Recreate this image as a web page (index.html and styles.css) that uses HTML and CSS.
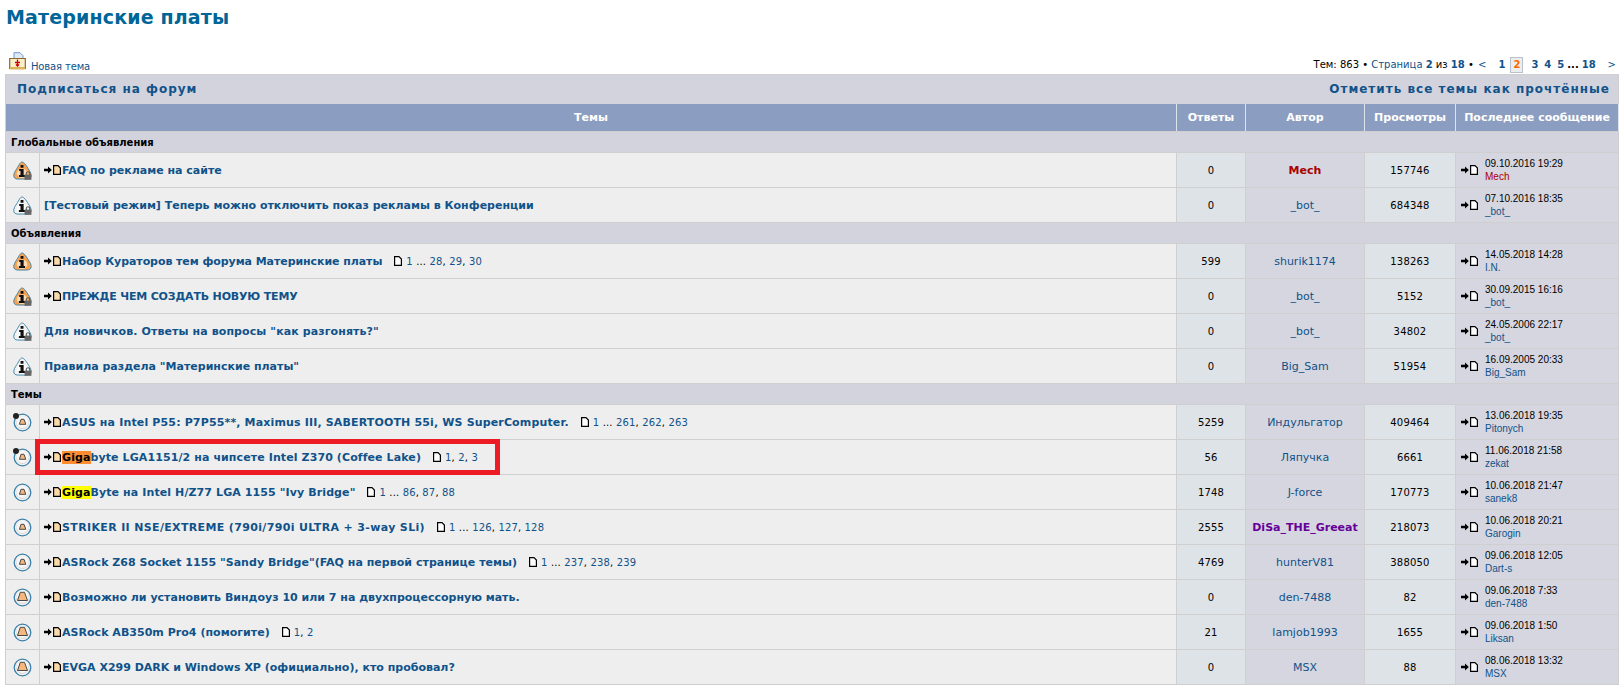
FILE: index.html
```html
<!DOCTYPE html>
<html lang="ru">
<head>
<meta charset="utf-8">
<title>Материнские платы</title>
<link rel="stylesheet" href="styles.css">
</head>
<body>
<svg class="defs" width="0" height="0" aria-hidden="true">
  <defs>
    <symbol id="doc" viewBox="0 0 8 10"><path d="M.6.6h4.400l2.400 2.400v6.400H.6z" stroke="#000" stroke-width="1.200" fill="currentColor"/></symbol>
    <symbol id="arr" viewBox="0 0 9 9"><path d="M0 3h4.500V.5L8.800 4.500 4.500 8.500V6H0z" fill="#000"/></symbol>
    <symbol id="info" viewBox="0 0 20 20"><path d="M9.500 1C7.800 1 6.500 4 4 8 2 11 .8 13 .8 15.500c0 2 1.500 3.500 4 3.500h9.500c3 0 4.800-1.200 4.800-3.500 0-2.500-1.100-4.500-3.100-7.500-2.500-4-4.800-7-6.500-7z" fill="currentColor" stroke="#3f87ad" stroke-width="1"/><ellipse cx="9.500" cy="13" rx="5.500" ry="5" fill="#fff" opacity=".6"/><path d="M8 4.300h3v2.700H8zM6.500 8.500h4.700v6.300h1.500v2H6.200v-2h1.700v-4.300H6.500z" fill="#111"/></symbol>
    <symbol id="lock" viewBox="0 0 8 10"><path d="M2 4.500V3C2 1.500 2.800.8 4 .8S6 1.500 6 3v1.500" fill="none" stroke="#555" stroke-width="1.200"/><rect x=".2" y="4" width="7.600" height="5.800" fill="#666"/></symbol>
    <symbol id="ring" viewBox="0 0 19 19"><circle cx="9.500" cy="9.500" r="8.300" fill="#f3f3f3" stroke="#3a80a8" stroke-width="1.300"/><circle cx="9.500" cy="9.500" r="6.500" fill="#d8d8d8"/><circle cx="9.500" cy="9" r="6" fill="#f7f7f7"/></symbol>
    <symbol id="bell-s" viewBox="0 0 19 19"><path d="M8 6.300h3l1.800 5H6.400z" fill="#f4b77c" stroke="#4a4a4a" stroke-width="1"/></symbol>
    <symbol id="bell-l" viewBox="0 0 19 19"><path d="M7.300 4.300h4.200l3 8.200h-10z" fill="#f4b77c" stroke="#4a4a4a" stroke-width="1"/></symbol>
    <symbol id="newtopic" viewBox="0 0 17 18"><path d="M5 .7h6l3 3v8H5z" fill="#dfeaf5" stroke="#6c9ccb"/><path d="M.7 6.500h15.600v9.800H.7z" fill="#fdeecb" stroke="#8a6a2a" stroke-width="1.200"/><path d="M1 15h15v2.500H1z" fill="#d9b45c"/><path d="M8.500 7.500v6M6 10.500h5M7 12.500l1.500 1.500 1.500-1.500" stroke="#c00" stroke-width="1.300" fill="none"/></symbol>
  </defs>
</svg>

<h2 class="page-title">Материнские платы</h2>

<div class="actions">
  <a class="new-topic" href="#"><svg class="nt-ico"><use href="#newtopic"/></svg><span>Новая тема</span></a>
  <div class="pager">Тем: 863 • <a href="#">Страница <b>2</b></a> из <a href="#"><b>18</b></a> • <a class="gap-r" href="#">&lt;</a><a class="p" href="#">1</a><strong class="cur">2</strong><a class="p" href="#">3</a><a class="p" href="#">4</a><a class="p" href="#">5</a><b class="dots">...</b><a class="p" href="#">18</a><a class="gap-l" href="#">&gt;</a></div>
</div>

<table class="forum">
  <colgroup><col class="c1"><col class="c2"><col class="c3"><col class="c4"><col class="c5"><col class="c6"></colgroup>
  <thead>
    <tr class="catbar"><td colspan="6"><div class="catflex"><a href="#">Подписаться на форум</a><a href="#">Отметить все темы как прочтённые</a></div></td></tr>
    <tr class="head"><th colspan="2">Темы</th><th>Ответы</th><th>Автор</th><th>Просмотры</th><th>Последнее сообщение</th></tr>
  </thead>
  <tbody>
    <tr class="group"><td colspan="6">Глобальные объявления</td></tr>
    <tr>
      <td class="ico"><span class="i-wrap sticky"><svg class="info"><use href="#info"/></svg><svg class="lock"><use href="#lock"/></svg></span></td>
      <td class="title"><svg class="arr"><use href="#arr"/></svg><svg class="doc unread"><use href="#doc"/></svg><a href="#">FAQ по рекламе на сайте</a></td>
      <td class="num">0</td><td class="author"><a class="red" href="#">Mech</a></td><td class="num">157746</td>
      <td class="last"><div class="lp"><span class="lp-ico"><svg class="arr"><use href="#arr"/></svg><svg class="doc"><use href="#doc"/></svg></span><div class="lp-t">09.10.2016 19:29<a class="red" href="#">Mech</a></div></div></td>
    </tr>
    <tr>
      <td class="ico"><span class="i-wrap plain"><svg class="info"><use href="#info"/></svg><svg class="lock"><use href="#lock"/></svg></span></td>
      <td class="title"><a href="#">[Тестовый режим] Теперь можно отключить показ рекламы в Конференции</a></td>
      <td class="num">0</td><td class="author"><a href="#">_bot_</a></td><td class="num">684348</td>
      <td class="last"><div class="lp"><span class="lp-ico"><svg class="arr"><use href="#arr"/></svg><svg class="doc"><use href="#doc"/></svg></span><div class="lp-t">07.10.2016 18:35<a href="#">_bot_</a></div></div></td>
    </tr>
    <tr class="group"><td colspan="6">Объявления</td></tr>
    <tr>
      <td class="ico"><span class="i-wrap sticky"><svg class="info"><use href="#info"/></svg></span></td>
      <td class="title ls-n1"><svg class="arr"><use href="#arr"/></svg><svg class="doc unread"><use href="#doc"/></svg><a href="#">Набор Кураторов тем форума Материнские платы</a><span class="pages"><svg class="doc small"><use href="#doc"/></svg><a href="#">1</a> ... <a href="#">28</a>, <a href="#">29</a>, <a href="#">30</a></span></td>
      <td class="num">599</td><td class="author"><a href="#">shurik1174</a></td><td class="num">138263</td>
      <td class="last"><div class="lp"><span class="lp-ico"><svg class="arr"><use href="#arr"/></svg><svg class="doc"><use href="#doc"/></svg></span><div class="lp-t">14.05.2018 14:28<a href="#">I.N.</a></div></div></td>
    </tr>
    <tr>
      <td class="ico"><span class="i-wrap sticky"><svg class="info"><use href="#info"/></svg><svg class="lock"><use href="#lock"/></svg></span></td>
      <td class="title ls-n2"><svg class="arr"><use href="#arr"/></svg><svg class="doc unread"><use href="#doc"/></svg><a href="#">ПРЕЖДЕ ЧЕМ СОЗДАТЬ НОВУЮ ТЕМУ</a></td>
      <td class="num">0</td><td class="author"><a href="#">_bot_</a></td><td class="num">5152</td>
      <td class="last"><div class="lp"><span class="lp-ico"><svg class="arr"><use href="#arr"/></svg><svg class="doc"><use href="#doc"/></svg></span><div class="lp-t">30.09.2015 16:16<a href="#">_bot_</a></div></div></td>
    </tr>
    <tr>
      <td class="ico"><span class="i-wrap plain"><svg class="info"><use href="#info"/></svg><svg class="lock"><use href="#lock"/></svg></span></td>
      <td class="title ls-s"><a href="#">Для новичков. Ответы на вопросы "как разгонять?"</a></td>
      <td class="num">0</td><td class="author"><a href="#">_bot_</a></td><td class="num">34802</td>
      <td class="last"><div class="lp"><span class="lp-ico"><svg class="arr"><use href="#arr"/></svg><svg class="doc"><use href="#doc"/></svg></span><div class="lp-t">24.05.2006 22:17<a href="#">_bot_</a></div></div></td>
    </tr>
    <tr>
      <td class="ico"><span class="i-wrap plain"><svg class="info"><use href="#info"/></svg><svg class="lock"><use href="#lock"/></svg></span></td>
      <td class="title"><a href="#">Правила раздела "Материнские платы"</a></td>
      <td class="num">0</td><td class="author"><a href="#">Big_Sam</a></td><td class="num">51954</td>
      <td class="last"><div class="lp"><span class="lp-ico"><svg class="arr"><use href="#arr"/></svg><svg class="doc"><use href="#doc"/></svg></span><div class="lp-t">16.09.2005 20:33<a href="#">Big_Sam</a></div></div></td>
    </tr>
    <tr class="group"><td colspan="6">Темы</td></tr>
    <tr>
      <td class="ico"><span class="i-wrap"><svg class="ring"><use href="#ring"/></svg><svg class="ring"><use href="#bell-s"/></svg><i class="dot"></i></span></td>
      <td class="title ls-m"><svg class="arr"><use href="#arr"/></svg><svg class="doc unread"><use href="#doc"/></svg><a href="#">ASUS на Intel P55: P7P55**, Maximus III, SABERTOOTH 55i, WS SuperComputer.</a><span class="pages"><svg class="doc small"><use href="#doc"/></svg><a href="#">1</a> ... <a href="#">261</a>, <a href="#">262</a>, <a href="#">263</a></span></td>
      <td class="num">5259</td><td class="author"><a href="#">Индульгатор</a></td><td class="num">409464</td>
      <td class="last"><div class="lp"><span class="lp-ico"><svg class="arr"><use href="#arr"/></svg><svg class="doc"><use href="#doc"/></svg></span><div class="lp-t">13.06.2018 19:35<a href="#">Pitonych</a></div></div></td>
    </tr>
    <tr>
      <td class="ico"><span class="i-wrap"><svg class="ring"><use href="#ring"/></svg><svg class="ring"><use href="#bell-s"/></svg><i class="dot"></i></span></td>
      <td class="title marked ls-s"><svg class="arr"><use href="#arr"/></svg><svg class="doc unread"><use href="#doc"/></svg><a href="#"><mark class="hl-o">Giga</mark>byte LGA1151/2 на чипсете Intel Z370 (Coffee Lake)</a><span class="pages"><svg class="doc small"><use href="#doc"/></svg><a href="#">1</a>, <a href="#">2</a>, <a href="#">3</a></span><i class="redbox"></i></td>
      <td class="num">56</td><td class="author"><a href="#">Ляпучка</a></td><td class="num">6661</td>
      <td class="last"><div class="lp"><span class="lp-ico"><svg class="arr"><use href="#arr"/></svg><svg class="doc"><use href="#doc"/></svg></span><div class="lp-t">11.06.2018 21:58<a href="#">zekat</a></div></div></td>
    </tr>
    <tr>
      <td class="ico"><span class="i-wrap"><svg class="ring"><use href="#ring"/></svg><svg class="ring"><use href="#bell-s"/></svg></span></td>
      <td class="title ls-s"><svg class="arr"><use href="#arr"/></svg><svg class="doc unread"><use href="#doc"/></svg><a href="#"><mark class="hl-y">Giga</mark>Byte на Intel H/Z77 LGA 1155 "Ivy Bridge"</a><span class="pages"><svg class="doc small"><use href="#doc"/></svg><a href="#">1</a> ... <a href="#">86</a>, <a href="#">87</a>, <a href="#">88</a></span></td>
      <td class="num">1748</td><td class="author"><a href="#">J-force</a></td><td class="num">170773</td>
      <td class="last"><div class="lp"><span class="lp-ico"><svg class="arr"><use href="#arr"/></svg><svg class="doc"><use href="#doc"/></svg></span><div class="lp-t">10.06.2018 21:47<a href="#">sanek8</a></div></div></td>
    </tr>
    <tr>
      <td class="ico"><span class="i-wrap"><svg class="ring"><use href="#ring"/></svg><svg class="ring"><use href="#bell-s"/></svg></span></td>
      <td class="title ls-l"><svg class="arr"><use href="#arr"/></svg><svg class="doc unread"><use href="#doc"/></svg><a href="#">STRIKER II NSE/EXTREME (790i/790i ULTRA + 3-way SLi)</a><span class="pages"><svg class="doc small"><use href="#doc"/></svg><a href="#">1</a> ... <a href="#">126</a>, <a href="#">127</a>, <a href="#">128</a></span></td>
      <td class="num">2555</td><td class="author"><a class="purple" href="#">DiSa_THE_Greeat</a></td><td class="num">218073</td>
      <td class="last"><div class="lp"><span class="lp-ico"><svg class="arr"><use href="#arr"/></svg><svg class="doc"><use href="#doc"/></svg></span><div class="lp-t">10.06.2018 20:21<a href="#">Garogin</a></div></div></td>
    </tr>
    <tr>
      <td class="ico"><span class="i-wrap"><svg class="ring"><use href="#ring"/></svg><svg class="ring"><use href="#bell-s"/></svg></span></td>
      <td class="title ls-t"><svg class="arr"><use href="#arr"/></svg><svg class="doc unread"><use href="#doc"/></svg><a href="#">ASRock Z68 Socket 1155 "Sandy Bridge"(FAQ на первой странице темы)</a><span class="pages"><svg class="doc small"><use href="#doc"/></svg><a href="#">1</a> ... <a href="#">237</a>, <a href="#">238</a>, <a href="#">239</a></span></td>
      <td class="num">4769</td><td class="author"><a href="#">hunterV81</a></td><td class="num">388050</td>
      <td class="last"><div class="lp"><span class="lp-ico"><svg class="arr"><use href="#arr"/></svg><svg class="doc"><use href="#doc"/></svg></span><div class="lp-t">09.06.2018 12:05<a href="#">Dart-s</a></div></div></td>
    </tr>
    <tr>
      <td class="ico"><span class="i-wrap"><svg class="ring"><use href="#ring"/></svg><svg class="ring"><use href="#bell-l"/></svg></span></td>
      <td class="title"><svg class="arr"><use href="#arr"/></svg><svg class="doc unread"><use href="#doc"/></svg><a href="#">Возможно ли установить Виндоуз 10 или 7 на двухпроцессорную мать.</a></td>
      <td class="num">0</td><td class="author"><a href="#">den-7488</a></td><td class="num">82</td>
      <td class="last"><div class="lp"><span class="lp-ico"><svg class="arr"><use href="#arr"/></svg><svg class="doc"><use href="#doc"/></svg></span><div class="lp-t">09.06.2018 7:33<a href="#">den-7488</a></div></div></td>
    </tr>
    <tr>
      <td class="ico"><span class="i-wrap"><svg class="ring"><use href="#ring"/></svg><svg class="ring"><use href="#bell-l"/></svg></span></td>
      <td class="title ls-t"><svg class="arr"><use href="#arr"/></svg><svg class="doc unread"><use href="#doc"/></svg><a href="#">ASRock AB350m Pro4 (помогите)</a><span class="pages"><svg class="doc small"><use href="#doc"/></svg><a href="#">1</a>, <a href="#">2</a></span></td>
      <td class="num">21</td><td class="author"><a href="#">lamjob1993</a></td><td class="num">1655</td>
      <td class="last"><div class="lp"><span class="lp-ico"><svg class="arr"><use href="#arr"/></svg><svg class="doc"><use href="#doc"/></svg></span><div class="lp-t">09.06.2018 1:50<a href="#">Liksan</a></div></div></td>
    </tr>
    <tr>
      <td class="ico"><span class="i-wrap"><svg class="ring"><use href="#ring"/></svg><svg class="ring"><use href="#bell-l"/></svg></span></td>
      <td class="title"><svg class="arr"><use href="#arr"/></svg><svg class="doc unread"><use href="#doc"/></svg><a href="#">EVGA X299 DARK и Windows XP (официально), кто пробовал?</a></td>
      <td class="num">0</td><td class="author"><a href="#">MSX</a></td><td class="num">88</td>
      <td class="last"><div class="lp"><span class="lp-ico"><svg class="arr"><use href="#arr"/></svg><svg class="doc"><use href="#doc"/></svg></span><div class="lp-t">08.06.2018 13:32<a href="#">MSX</a></div></div></td>
    </tr>
  </tbody>
</table>
</body>
</html>
```
FILE: styles.css
```css
html, body { margin: 0; padding: 0; background: #fff; overflow: hidden; }
body { height: 685px; padding: 0 3px 0 5px; font-family: "DejaVu Sans", Verdana, sans-serif; font-size: 11px; color: #000; }
.defs { display: block; height: 0; }
a { color: #105289; text-decoration: none; }
.page-title { margin: 0; padding: 4px 0 0 1px; height: 36px; font-family: "DejaVu Sans", sans-serif; font-weight: bold; font-size: 19px; letter-spacing: .15px; line-height: 26px; color: #006597; }
.actions { display: flex; justify-content: space-between; align-items: flex-end; height: 34px; padding: 0 2px 0 4px; box-sizing: border-box; }
.new-topic { display: flex; align-items: flex-end; font-size: 10px; line-height: 12px; }
.new-topic span { padding-bottom: 1px; margin-left: 5px; letter-spacing: -.15px; }
.nt-ico { width: 17px; height: 18px; margin-bottom: 4px; }
.pager { display: flex; align-items: center; white-space: pre; font-size: 10px; line-height: 14px; padding-bottom: 1px; }
.pager .p { font-weight: bold; margin: 0 3px; }
.pager .gap-r { margin: 0 9px 0 1px; }
.pager .gap-l { margin-left: 9px; }
.pager .cur { font-weight: bold; color: #ff6600; background: #ecedee; border: 1px solid #b8c0cc; padding: 0 2px; margin: 0 5px 0 2px; }
.pager .dots { font-weight: bold; }
.forum { width: 1613px; table-layout: fixed; border-collapse: separate; border-spacing: 1px; background: #cfcfcf; }
.c1 { width: 33px; } .c2 { width: 1136px; } .c3 { width: 68px; } .c4 { width: 118px; } .c5 { width: 90px; } .c6 { width: 162px; }
.forum td, .forum th { padding: 0; }
.catbar td { height: 29px; background: #d3d3dd; padding: 0 8px 1px 11px; box-sizing: border-box; box-shadow: 0 1px 0 #d3d3dd; }
.catflex { display: flex; justify-content: space-between; font-size: 12px; font-weight: bold; letter-spacing: 1px; }
.catbar { height: 28px; }
.catbar td { height: 28px; }
.head th { height: 27px; background: #8b9dc0; color: #fff; font-size: 11px; font-weight: bold; box-shadow: 1px 0 0 #dfe3ec; }
.forum tbody tr { height: 34px; }
.forum tbody tr.group { height: 20px; }
.forum .group td { height: 20px; background: #d3d3dd; padding-left: 5px; font-size: 10px; font-weight: bold; color: #000; }
td.ico { background: #eee; text-align: center; vertical-align: middle; }
.forum td.title { background: #eee; padding-left: 4px; font-size: 11px; font-weight: bold; white-space: nowrap; vertical-align: middle; }
.ls-n2 { letter-spacing: -.17px; }
.ls-n1 { letter-spacing: -.07px; }
.ls-t { letter-spacing: .03px; }
.ls-s { letter-spacing: .1px; }
.ls-m { letter-spacing: .15px; }
.ls-l { letter-spacing: .35px; }
td.marked { position: relative; }
.redbox { position: absolute; left: -5px; top: -1px; width: 455px; height: 26px; border: 5px solid #ed1c24; }
.num { background: #dee3e7; text-align: center; font-size: 10px; letter-spacing: .2px; }
.author { background: #d5d6df; text-align: center; font-size: 11px; }
.author a.red, .lp-t a.red { color: #aa0000; }
.author a.red, .author a.purple { font-weight: bold; }
.author a.purple { color: #660099; }
.last { background: #d5d6df; }
.lp { display: flex; align-items: center; padding-left: 5px; }
.lp-ico { display: flex; align-items: center; width: 24px; }
.lp-t { display: flex; flex-direction: column; font-family: "Liberation Sans", Arial, sans-serif; font-size: 10px; line-height: 13px; }
.arr { width: 8px; height: 8px; }
.doc { width: 8px; height: 10px; color: #fff; vertical-align: -1px; margin-left: 1px; }
.doc.unread { color: #fcd9a8; margin-right: 1px; }
.title .arr { vertical-align: 0; }
.pages { font-weight: normal; font-size: 10px; margin-left: 12px; letter-spacing: .15px; }
.doc.small { width: 8px; height: 10px; margin: 0 4px 0 0; }
mark { color: #000; }
.hl-o { background: #ff8c2e; }
.hl-y { background: #ffff00; }
.i-wrap { display: inline-block; position: relative; width: 19px; height: 19px; vertical-align: middle; }
.i-wrap svg { position: absolute; left: 0; top: 0; }
.info { width: 19px; height: 19px; }
.sticky .info { color: #f7a24e; }
.plain .info { color: #f2f2f2; }
.i-wrap .lock { left: 11px; top: 10px; width: 8px; height: 9px; }
.ring { width: 19px; height: 19px; }
.dot { position: absolute; left: 0; top: 0; width: 6px; height: 6px; border-radius: 50%; background: #222; }
```
